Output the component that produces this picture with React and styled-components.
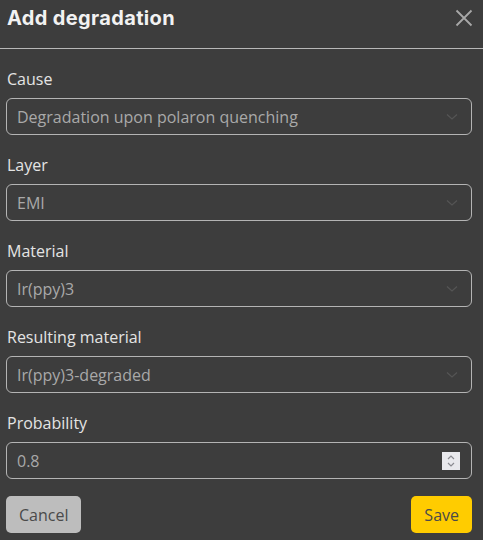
import React from "react";
import styled, { createGlobalStyle } from "styled-components";

const GlobalStyle = createGlobalStyle`
  html, body {
    margin: 0;
    padding: 0;
    background: #3d3d3d;
  }
  body {
    font-family: "Open Sans", "Liberation Sans", sans-serif;
  }
`;

const Dialog = styled.div`
  width: 483px;
  height: 540px;
  background: #3d3d3d;
  box-sizing: border-box;
  display: flex;
  flex-direction: column;
`;

const Header = styled.div`
  display: flex;
  align-items: center;
  justify-content: space-between;
  height: 36px;
  padding: 0 10px 12px 7px;
  border-bottom: 1px solid #b8b8b8;
`;

const Title = styled.h2`
  margin: 0;
  font-family: "Inter", "Noto Sans", sans-serif;
  font-weight: 700;
  font-size: 20px;
  letter-spacing: 0.35px;
  color: #f2f2f2;
`;

const CloseButton = styled.button`
  background: none;
  border: none;
  padding: 0;
  width: 18px;
  height: 18px;
  cursor: pointer;
  display: flex;
`;

const Body = styled.div`
  display: flex;
  flex-direction: column;
  gap: 19px;
  padding: 19px 11px 0 6px;
`;

const Field = styled.div`
  display: flex;
  flex-direction: column;
  gap: 8px;
`;

const Label = styled.label`
  font-size: 16px;
  line-height: 22px;
  color: #e4e4e4;
  padding-left: 1px;
`;

const Box = styled.div`
  height: 37px;
  box-sizing: border-box;
  border: 1px solid #b4b4b4;
  border-radius: 6px;
  display: flex;
  align-items: center;
  justify-content: space-between;
  padding: 0 10px;
  font-size: 16px;
  color: #a9a9a9;
`;

const Value = styled.span`
  line-height: 22px;
`;

const Spinner = styled.div`
  width: 18px;
  height: 18px;
  background: #e8e8ec;
  display: flex;
  align-items: center;
  justify-content: center;
  margin-right: 1px;
`;

const Footer = styled.div`
  display: flex;
  justify-content: space-between;
  padding: 17px 11px 0 6px;
`;

const Button = styled.button`
  height: 37px;
  border: none;
  border-radius: 5px;
  padding: 0 13px;
  font-family: "Open Sans", "Liberation Sans", sans-serif;
  font-size: 16px;
  color: #4a4a4a;
  background: ${(p) => (p.$primary ? "#ffcc00" : "#bdbdbd")};
`;

const Chevron = () => (
  <svg width="12" height="8" viewBox="0 0 12 8" style={{ marginRight: 3 }}>
    <path d="M1 1.5 L6 6 L11 1.5" fill="none" stroke="#555" strokeWidth="1.2" />
  </svg>
);

const fields = [
  { label: "Cause", value: "Degradation upon polaron quenching" },
  { label: "Layer", value: "EMI" },
  { label: "Material", value: "Ir(ppy)3" },
  { label: "Resulting material", value: "Ir(ppy)3-degraded" },
];

export default function App() {
  return (
    <>
      <GlobalStyle />
      <Dialog>
        <Header>
          <Title>Add degradation</Title>
          <CloseButton aria-label="close">
            <svg width="18" height="18" viewBox="0 0 18 18">
              <path d="M1.5 1.5 L16.5 16.5 M16.5 1.5 L1.5 16.5" stroke="#a8a8a8" strokeWidth="1.8" />
            </svg>
          </CloseButton>
        </Header>
        <Body>
          {fields.map((f) => (
            <Field key={f.label}>
              <Label>{f.label}</Label>
              <Box>
                <Value>{f.value}</Value>
                <Chevron />
              </Box>
            </Field>
          ))}
          <Field>
            <Label>Probability</Label>
            <Box>
              <Value>0.8</Value>
              <Spinner>
                <svg width="10" height="14" viewBox="0 0 10 14">
                  <path d="M2 5 L5 2 L8 5 M2 9 L5 12 L8 9" fill="none" stroke="#8a8a90" strokeWidth="1.2" />
                </svg>
              </Spinner>
            </Box>
          </Field>
        </Body>
        <Footer>
          <Button>Cancel</Button>
          <Button $primary>Save</Button>
        </Footer>
      </Dialog>
    </>
  );
}
